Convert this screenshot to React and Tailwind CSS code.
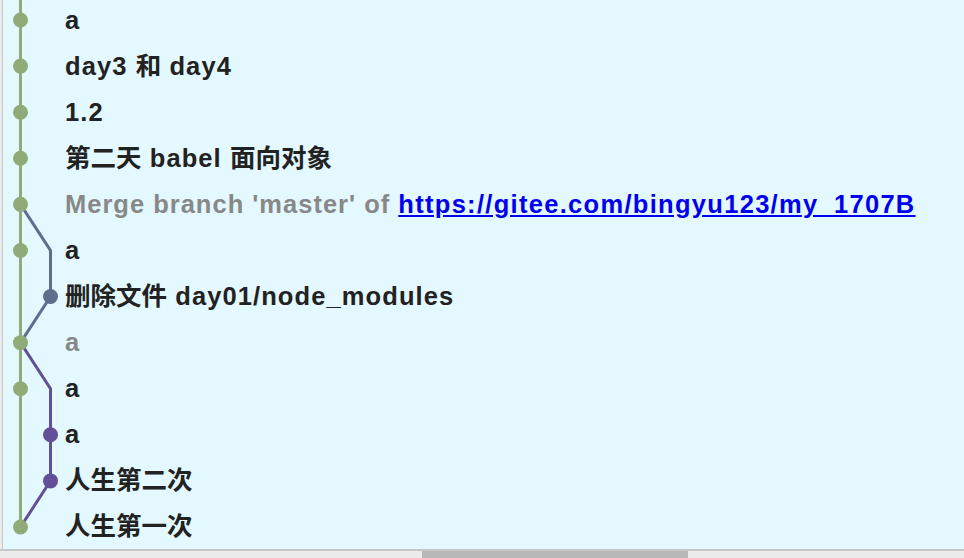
import React from "react";

const RH = 46.09;

const C = ({ children }) => <span className="tracking-normal">{children}</span>;

const rows = [
  { el: "a" },
  { el: <>day3 <C>和</C> day4</> },
  { el: "1.2" },
  { el: <><C>第二天</C> babel <C>面向对象</C></> },
  { merge: true },
  { el: "a" },
  { el: <><C>删除文件</C> day01/node_modules</> },
  { el: "a", gray: true },
  { el: "a" },
  { el: "a" },
  { el: <C>人生第二次</C> },
  { el: <C>人生第一次</C> },
];

const L0 = 17.5;
const L1 = 47.5;
const OFF = 20;
const cy = (i) => OFF + i * RH;

const GREEN = "#90ab78";
const SLATE = "#5f6d8f";
const PURPLE = "#634f98";

function Graph() {
  const h = 12 * RH + 10;
  return (
    <svg width="62" height={h} className="shrink-0 block" style={{ marginTop: -3 }}>
      <g transform="translate(0,3)">
        <line x1={L0} y1={-5} x2={L0} y2={cy(11)} stroke={GREEN} strokeWidth="3" />
        <polyline
          points={`${L0},${cy(4)} ${L1},${cy(5)} ${L1},${cy(6)} ${L0},${cy(7)}`}
          fill="none"
          stroke={SLATE}
          strokeWidth="3"
        />
        <polyline
          points={`${L0},${cy(7)} ${L1},${cy(8)} ${L1},${cy(10)} ${L0},${cy(11)}`}
          fill="none"
          stroke={PURPLE}
          strokeWidth="3"
        />
        {[0, 1, 2, 3, 4, 5, 7, 8, 11].map((i) => (
          <circle key={i} cx={L0} cy={cy(i)} r="7.5" fill={GREEN} />
        ))}
        <circle cx={L1} cy={cy(6)} r="7.5" fill={SLATE} />
        <circle cx={L1} cy={cy(9)} r="7.5" fill={PURPLE} />
        <circle cx={L1} cy={cy(10)} r="7.5" fill={PURPLE} />
      </g>
    </svg>
  );
}

export default function App() {
  return (
    <div
      className="w-[964px] h-[558px] flex flex-col overflow-hidden bg-[#e3f8ff]"
      style={{ fontFamily: '"Liberation Sans", "Noto Sans CJK SC", sans-serif' }}
    >
      <div className="flex-1 flex overflow-hidden">
        <div className="w-[2px] bg-[#ececec] shrink-0" />
        <div className="w-[1px] bg-[#c9c9c9] shrink-0" />
        <Graph />
        <div className="flex flex-col -mt-[3px]">
          {rows.map((r, i) => (
            <div
              key={i}
              className="h-[46.09px] flex items-center text-[25.5px] tracking-[1.1px] font-bold whitespace-nowrap text-[#222]"
            >
              {r.merge ? (
                <span>
                  <span className="text-[#888] tracking-[1px]">Merge branch 'master' of </span>
                  <span className="text-[#0000ee] underline tracking-[1.3px]">
                    https://gitee.com/bingyu123/my_1707B
                  </span>
                </span>
              ) : (
                <span className={r.gray ? "text-[#888]" : ""}>{r.el}</span>
              )}
            </div>
          ))}
        </div>
      </div>
      <div className="h-[2px] bg-[#c6c6c6] shrink-0" />
      <div className="h-[7px] bg-[#ececec] shrink-0 flex">
        <div className="w-[422px]" />
        <div className="w-[266px] bg-[#b8b8b8]" />
      </div>
    </div>
  );
}
